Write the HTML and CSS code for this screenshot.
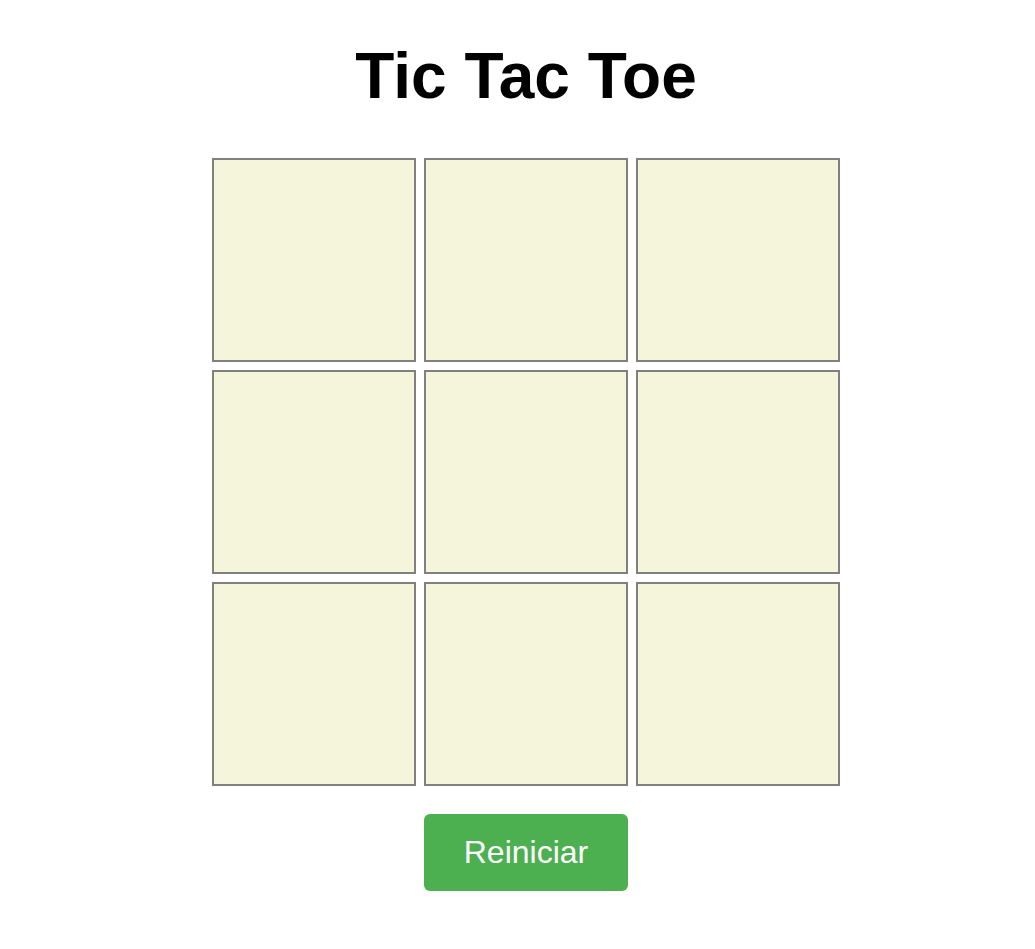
FILE: index.html
```html
<!DOCTYPE html>
<html lang="es">
<head>
<meta charset="utf-8">
<title>Tic Tac Toe</title>
<link rel="stylesheet" href="styles.css">
</head>
<body>
<main class="page">
  <h1 class="title">Tic Tac Toe</h1>
  <div class="board">
    <div class="cell"></div>
    <div class="cell"></div>
    <div class="cell"></div>
    <div class="cell"></div>
    <div class="cell"></div>
    <div class="cell"></div>
    <div class="cell"></div>
    <div class="cell"></div>
    <div class="cell"></div>
  </div>
  <button class="reset" type="button">Reiniciar</button>
</main>
</body>
</html>
```
FILE: styles.css
```css
html, body {
  margin: 0;
  padding: 0;
  background: #ffffff;
}

body {
  font-family: "Liberation Sans", Arial, sans-serif;
  color: #000000;
}

.page {
  display: flex;
  flex-direction: column;
  align-items: center;
  padding: 40px 0 0 17px;
}

.title {
  margin: 0;
  font-size: 64px;
  line-height: 72px;
  font-weight: 700;
}

.board {
  margin-top: 46px;
  display: grid;
  grid-template-columns: repeat(3, 204px);
  grid-template-rows: repeat(3, 204px);
  gap: 8px;
}

.cell {
  border: 2px solid #808080;
  background: #f5f5dc;
}

.reset {
  margin-top: 28px;
  padding: 20px 40px;
  border: none;
  border-radius: 6px;
  background: #4caf50;
  color: #ffffff;
  font-family: "Liberation Sans", Arial, sans-serif;
  font-size: 32px;
  line-height: 37px;
  cursor: pointer;
}
```
